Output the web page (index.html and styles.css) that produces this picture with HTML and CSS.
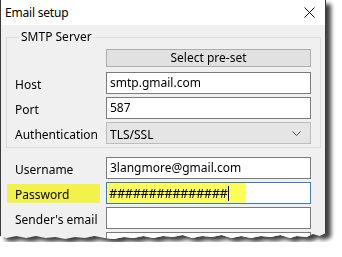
FILE: index.html
```html
<!DOCTYPE html>
<html lang="en">
<head>
 <meta charset="UTF-8">
 <title>Email setup</title>
 <link rel="stylesheet" href="styles.css">
</head>
<body>
 <div class="shadow">
  <div class="window">
   <div class="titlebar">
    <span class="title">Email setup</span>
    <svg class="close" width="11" height="11" viewBox="0 0 11 11">
     <path d="M0.5 0.5 L10.5 10.5 M10.5 0.5 L0.5 10.5" stroke="#111" stroke-width="1" fill="none"/>
    </svg>
   </div>
   <div class="content">
    <fieldset class="group">
     <legend>SMTP Server</legend>
     <div class="row">
      <span class="lbl"></span>
      <button class="btn">Select pre-set</button>
     </div>
     <div class="row">
      <span class="lbl">Host</span>
      <div class="field">smtp.gmail.com</div>
     </div>
     <div class="row">
      <span class="lbl">Port</span>
      <div class="field">587</div>
     </div>
     <div class="row">
      <span class="lbl">Authentication</span>
      <div class="combo">
       <span>TLS/SSL</span>
       <svg width="9" height="6" viewBox="0 0 9 6">
        <path d="M0.5 0.5 L4.5 4.5 L8.5 0.5" stroke="#444" stroke-width="1" fill="none"/>
       </svg>
      </div>
     </div>
    </fieldset>

    <div class="account">
     <div class="row">
      <span class="lbl">Username</span>
      <div class="field">3langmore@gmail.com</div>
     </div>
     <div class="row">
      <span class="lbl mark">Password</span>
      <div class="field focus"><span class="hl">###############<i class="caret"></i></span></div>
     </div>
     <div class="row">
      <span class="lbl">Sender's email</span>
      <div class="field"></div>
     </div>
     <div class="row">
      <span class="lbl"></span>
      <div class="field"></div>
     </div>
    </div>
   </div>
  </div>
 </div>
</body>
</html>
```

FILE: styles.css
```css
* {
  box-sizing: border-box;
}

body {
  margin: 0;
  background: #fff;
  font-family: "Noto Sans", "Open Sans", sans-serif;
  font-size: 12px;
  color: #000;
}

.shadow {
  width: 326px;
  filter: drop-shadow(5px 4px 2px rgba(0,0,0,0.75));
}

.window {
  height: 242px;
  background: #f0f0f0;
  border-left: 1px solid #3a3a3a;
  border-right: 1px solid #3a3a3a;
  overflow: hidden;
  clip-path: polygon(0 0, 100% 0, 100% 233px, 98% 236px, 96% 234px, 94% 237px, 91% 236px, 89% 238px,
    86% 235px, 83% 237px, 80% 236px, 77% 238px, 74% 236px, 71% 238px, 68% 235px, 65% 237px,
    62% 236px, 59% 238px, 56% 235px, 53% 237px, 50% 236px, 47% 238px, 44% 236px, 41% 238px,
    38% 237px, 35% 239px, 32% 238px, 29% 236px, 26% 238px, 23% 237px, 20% 239px, 17% 237px,
    14% 238px, 11% 236px, 8% 238px, 5% 236px, 2% 238px, 0 236px);
}

.titlebar {
  height: 25px;
  background: #fff;
  display: flex;
  align-items: center;
  justify-content: space-between;
  padding: 0 10px 0 4px;
}

.title {
  font-size: 12px;
  letter-spacing: -0.2px;
}

.content {
  padding: 4px 0 0 5px;
}

.group {
  margin: 0;
  width: 315px;
  border: 1px solid #dcdcdc;
  padding: 2px 8px 3px 8px;
  display: flex;
  flex-direction: column;
  gap: 3px;
}

.group legend {
  padding: 0 2px;
  margin-left: 4px;
  line-height: 16px;
}

.row {
  display: flex;
  align-items: center;
  height: 22px;
}

.lbl {
  width: 91px;
  flex: none;
  padding-top: 2px;
}

.btn {
  width: 205px;
  height: 18px;
  margin: 0;
  padding: 0;
  background: #e1e1e1;
  border: 1px solid #adadad;
  font-family: inherit;
  font-size: 12px;
  line-height: 14px;
}

.group .row:first-child {
  margin-bottom: 1px;
}

.field {
  width: 205px;
  height: 22px;
  background: #fff;
  border: 1px solid #7a7a7a;
  padding: 2px 3px;
  line-height: 16px;
  white-space: nowrap;
}

.combo {
  width: 205px;
  height: 22px;
  background: #e5e5e5;
  border: 1px solid #bcbcbc;
  padding: 2px 9px 0 3px;
  display: flex;
  align-items: center;
  justify-content: space-between;
}

.account {
  padding: 9px 0 0 9px;
  display: flex;
  flex-direction: column;
  gap: 3px;
}

.account .lbl {
  width: 91px;
}

.account .lbl.mark {
  background: #f2f24a;
  margin-left: -8px;
  padding-left: 8px;
  width: 93px;
  margin-right: 6px;
  height: 19px;
  line-height: 17px;
}

.focus {
  border-color: #3d7cb5;
  padding: 0;
}

.hl {
  display: inline-block;
  background: #ffff55;
  width: 139px;
  height: 20px;
  padding: 2px 2px 0 2px;
  line-height: 16px;
  font-size: 13px;
  letter-spacing: -0.5px;
}

.caret {
  display: inline-block;
  width: 1px;
  height: 15px;
  background: #000;
  vertical-align: -3px;
  margin-left: 1px;
}
```
